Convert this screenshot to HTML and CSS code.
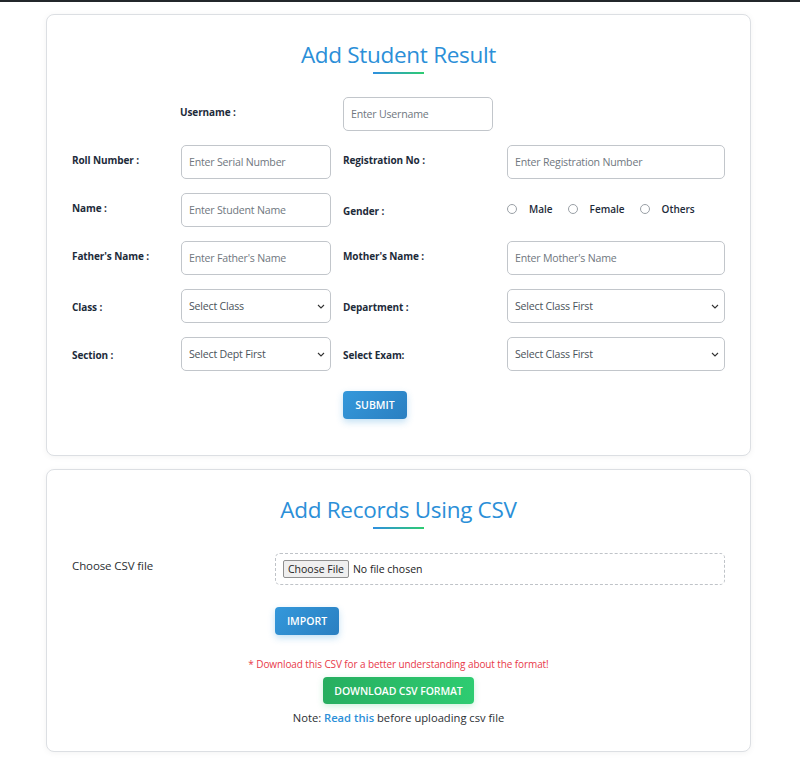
FILE: index.html
```html
<!DOCTYPE html>
<html lang="en">
<head>
<meta charset="utf-8">
<title>Add Student Result</title>
<link rel="stylesheet" href="styles.css">
</head>
<body>
<div class="topbar"></div>
<main class="page">
  <section class="card card-result">
    <h2 class="title">Add Student Result</h2>
    <div class="title-bar"></div>
    <form class="grid">
      <label class="lbl c2">Username :</label>
      <input class="field c3 short" type="text" placeholder="Enter Username">

      <label class="lbl c1">Roll Number :</label>
      <input class="field short" type="text" placeholder="Enter Serial Number">
      <label class="lbl">Registration No :</label>
      <input class="field" type="text" placeholder="Enter Registration Number">

      <label class="lbl">Name :</label>
      <input class="field short" type="text" placeholder="Enter Student Name">
      <label class="lbl lbl-gender">Gender :</label>
      <div class="radios">
        <label class="radio"><input type="radio" name="g"><span>Male</span></label>
        <label class="radio"><input type="radio" name="g"><span>Female</span></label>
        <label class="radio"><input type="radio" name="g"><span>Others</span></label>
      </div>

      <label class="lbl">Father's Name :</label>
      <input class="field short" type="text" placeholder="Enter Father's Name">
      <label class="lbl">Mother's Name :</label>
      <input class="field" type="text" placeholder="Enter Mother's Name">

      <label class="lbl lbl-sel">Class :</label>
      <select class="field select short"><option>Select Class</option></select>
      <label class="lbl lbl-sel">Department :</label>
      <select class="field select"><option>Select Class First</option></select>

      <label class="lbl lbl-sel">Section :</label>
      <select class="field select short"><option>Select Dept First</option></select>
      <label class="lbl lbl-sel">Select Exam:</label>
      <select class="field select"><option>Select Class First</option></select>

      <div class="submit-cell c3"><button type="button" class="btn btn-blue">SUBMIT</button></div>
    </form>
  </section>

  <section class="card card-csv">
    <h2 class="title">Add Records Using CSV</h2>
    <div class="title-bar"></div>
    <div class="csv-row">
      <label class="csv-label">Choose CSV file</label>
      <div class="file-box"><input type="file" class="file-input"></div>
    </div>
    <div class="import-row"><button type="button" class="btn btn-blue btn-import">IMPORT</button></div>
    <p class="warn">* Download this CSV for a better understanding about the format!</p>
    <div class="center"><button type="button" class="btn btn-green">DOWNLOAD CSV FORMAT</button></div>
    <p class="note">Note: <a href="#" class="link">Read this</a> before uploading csv file</p>
  </section>
</main>
</body>
</html>
```

FILE: styles.css
```css
* { box-sizing: border-box; }
html, body { margin: 0; padding: 0; background: #fff; }
body {
  font-family: "Open Sans", "Noto Sans", sans-serif;
  color: #212529;
}
.topbar { height: 2px; background: #23272b; }
.page {
  padding: 12px 0 20px 46px;
  width: 751px;
  display: flex;
  flex-direction: column;
  gap: 13px;
}
.card {
  border: 1px solid #dcdfe3;
  border-radius: 8px;
  background: #fff;
  box-shadow: 0 1px 6px rgba(0,0,0,0.05);
  padding: 0 25px;
  display: flex;
  flex-direction: column;
}
.card-result { height: 442px; padding-top: 24px; }
.card-csv { height: 283px; padding-top: 24px; }
.title {
  margin: 0;
  text-align: center;
  font-size: 22.5px;
  line-height: 32px;
  font-weight: 400;
  color: #2b8fd8;
  letter-spacing: -0.3px;
}
.title-bar {
  width: 51px;
  height: 2px;
  margin: 1px auto 0;
  background: linear-gradient(90deg, #2f8fe0, #2ecc71);
}
.grid {
  margin-top: 23px;
  display: grid;
  grid-template-columns: 109px 162px 164px 218px;
  grid-auto-rows: 34px;
  row-gap: 14px;
}
.c1 { grid-column: 1; }
.c2 { grid-column: 2; }
.c3 { grid-column: 3; }
.lbl {
  font-size: 10px;
  font-weight: 700;
  color: #1d2b3a;
  line-height: 16px;
  padding-top: 7px;
  letter-spacing: -0.1px;
}
.lbl.c2 { margin-left: -1px; }
.lbl-gender { padding-top: 10px; }
.lbl-sel { padding-top: 10px; }
.field {
  height: 34px;
  width: 218px;
  border: 1.5px solid #c2c6cb;
  border-radius: 5px;
  padding: 0 7px;
  font-family: inherit;
  font-size: 10.6px;
  letter-spacing: -0.2px;
  color: #495057;
  background: #fff;
  outline: none;
}
.field.short { width: 150px; }
.field::placeholder { color: #6f7780; }
.select {
  appearance: none;
  -webkit-appearance: none;
  color: #4a525a;
  background-image: url("data:image/svg+xml,%3Csvg xmlns='http://www.w3.org/2000/svg' width='8' height='5' viewBox='0 0 8 5'%3E%3Cpath d='M1 1l3 3 3-3' fill='none' stroke='%23333' stroke-width='1.1'/%3E%3C/svg%3E");
  background-repeat: no-repeat;
  background-position: right 5px center;
}
.radios {
  display: flex;
  align-items: center;
  height: 34px;
  padding-bottom: 2px;
}
.radio {
  display: flex;
  align-items: center;
  font-size: 10px;
  font-weight: 600;
  color: #1d2b3a;
  margin-right: 15px;
}
.radio input {
  margin: 0 12px 0 0;
  width: 10px;
  height: 10px;
  appearance: none;
  -webkit-appearance: none;
  border: 1px solid #9aa0a6;
  border-radius: 50%;
  background: #fff;
}
.submit-cell { padding-top: 6px; height: 54px; }
.btn {
  border: none;
  border-radius: 4px;
  font-family: inherit;
  font-weight: 600;
  color: #fff;
  cursor: pointer;
}
.btn-blue {
  height: 28px;
  width: 64px;
  font-size: 10.5px;
  background: linear-gradient(135deg, #3498db, #2a7fc1);
  box-shadow: 0 3px 7px rgba(52,152,219,0.3);
}
.csv-row {
  margin-top: 24px;
  display: flex;
  align-items: center;
}
.csv-label {
  width: 203px;
  font-size: 11.5px;
  letter-spacing: -0.1px;
  color: #2b2f33;
  padding-bottom: 7px;
}
.file-box {
  width: 450px;
  height: 32px;
  border: 1px dashed #bfc3c8;
  border-radius: 5px;
  padding: 0 7px;
  display: flex;
  align-items: center;
}
.file-input {
  font-family: "Open Sans", sans-serif;
  font-size: 10.5px;
  color: #222;
}
.file-input::file-selector-button {
  font-family: inherit;
  font-size: 10.5px;
  padding: 1px 4px;
  margin-right: 4px;
  border: 1px solid #8f8f8f;
  border-radius: 2px;
  background: #efefef;
  color: #222;
}
.import-row { margin-top: 22px; padding-left: 203px; }
.btn-import { width: 64px; height: 28px; }
.warn {
  margin: 22px 0 0;
  text-align: center;
  font-size: 10px;
  line-height: 14px;
  letter-spacing: -0.1px;
  color: #e8394a;
}
.center { display: flex; justify-content: center; margin-top: 6px; }
.btn-green {
  height: 27px;
  width: 151px;
  font-size: 10.5px;
  letter-spacing: -0.1px;
  background: linear-gradient(90deg, #27ae60, #2ecc71);
  box-shadow: 0 2px 6px rgba(46,204,113,0.25);
}
.note {
  margin: 5px 0 0;
  text-align: center;
  font-size: 11.2px;
  line-height: 18px;
  color: #2b2f33;
}
.link { color: #2b8fd8; text-decoration: none; font-weight: 600; }
```
